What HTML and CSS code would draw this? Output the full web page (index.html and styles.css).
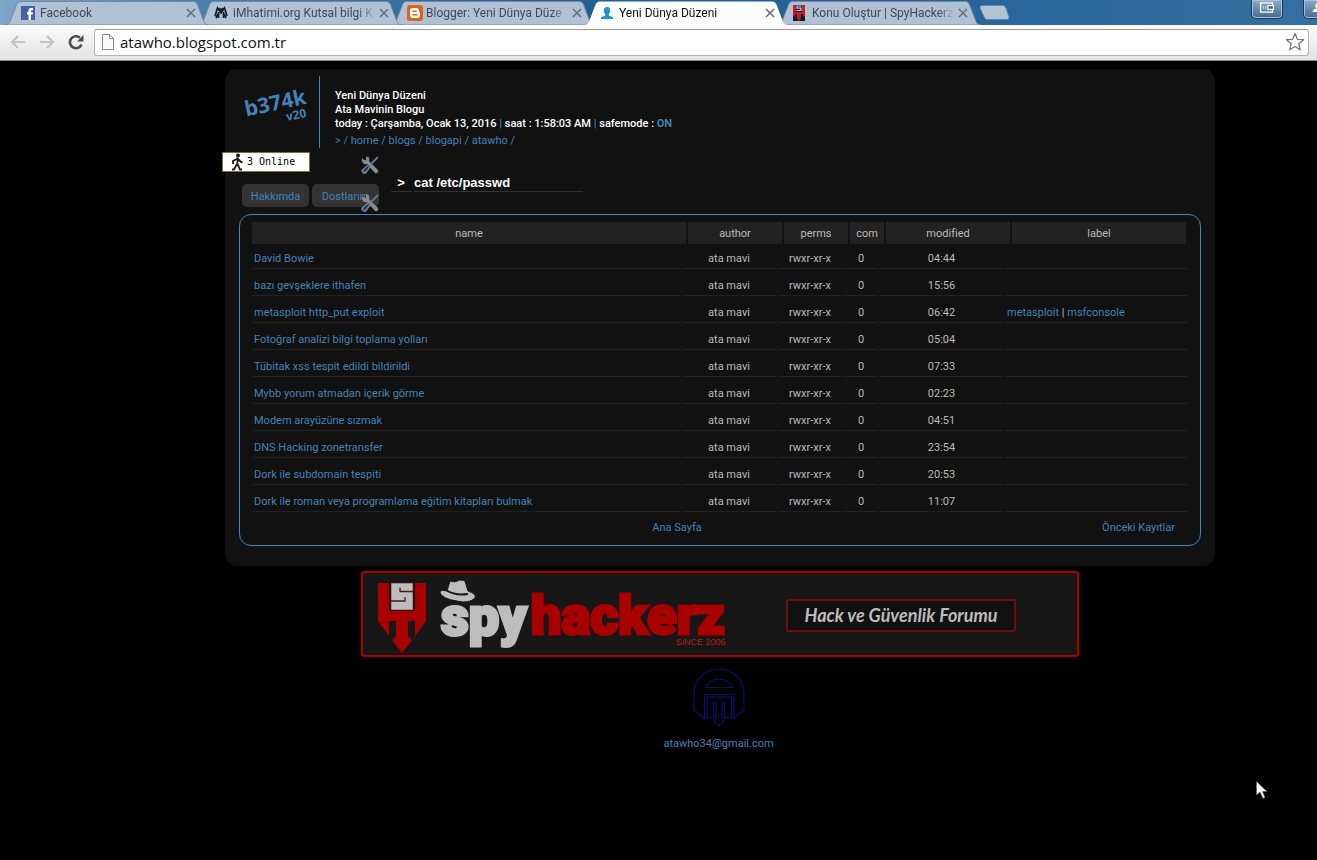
FILE: index.html
```html
<!DOCTYPE html>
<html lang="tr">
<head>
<meta charset="utf-8">
<title>Yeni Dünya Düzeni</title>
<link rel="stylesheet" href="styles.css">
</head>
<body>
<svg class="defs" aria-hidden="true">
  <symbol id="tab" viewBox="0 0 204 25" preserveAspectRatio="none">
    <path d="M0 25C4 25 5 22 6 19L11 6Q12 1.500 16 1.500H188Q192 1.500 193 6L198 19C199 22 200 25 204 25Z"/>
  </symbol>
  <symbol id="close" viewBox="0 0 10 10"><path d="M1 1L9 9M9 1L1 9" fill="none" stroke="currentColor" stroke-width="1.600"/></symbol>
  <symbol id="tools" viewBox="0 0 18 18">
    <path d="M1 2L3 4H5V1C8 0 9 3 8 5L17 14C18 16 16 18 14 17L6 8C3 9 0 6 1 2Z" fill="#8b8b8b"/>
    <path d="M17 1L9 9" stroke="#66758b" stroke-width="2"/>
    <path d="M8 8L10 10L5 17C3 19 0 16 1 14Z" fill="#526783" stroke="#98a2ae" stroke-width=".8"/>
    <path d="M3 15L7 11" stroke="#1d2d44" stroke-width="1.200"/>
  </symbol>
</svg>

<header class="browser">
  <nav class="tabs" aria-label="Sekmeler">
    <div class="tab t1">
      <svg class="shape"><use href="#tab"/></svg>
      <svg class="fav" viewBox="0 0 16 16"><rect x="0" y="1" width="14" height="14" fill="#4760a5"/><path d="M7.500 15V9.500H6V7.300H7.500V5.500Q7.500 3 10 3H12V5.200H10.800Q10 5.200 10 6V7.300H12L11.700 9.500H10V15Z" fill="#fff"/></svg>
      <a class="title" href="#">Facebook</a>
      <button class="x" aria-label="Kapat"><svg><use href="#close"/></svg></button>
    </div>
    <div class="tab t2">
      <svg class="shape"><use href="#tab"/></svg>
      <svg class="fav" viewBox="0 0 16 16"><path d="M1 11L3.500 3L7 8L10.500 3L13 11M4.500 13V7M9.500 13V7M2 13L4 9M12 13L10 9M5 3L7 5L9 3" fill="none" stroke="#121d2b" stroke-width="1.700"/></svg>
      <a class="title" href="#">iMhatimi.org Kutsal bilgi K</a>
      <button class="x" aria-label="Kapat"><svg><use href="#close"/></svg></button>
    </div>
    <div class="tab t3">
      <svg class="shape"><use href="#tab"/></svg>
      <svg class="fav" viewBox="0 0 16 16"><rect width="16" height="16" rx="3" fill="#d9651f"/><path d="M6 3H9Q12 3 12 6Q12 7 13 7.500V10Q13 13 10 13H6Q3 13 3 10V6Q3 3 6 3Z" fill="#fff"/><path d="M6 6.200H9M6 9.800H10" stroke="#d9651f" stroke-width="1.500" stroke-linecap="round"/></svg>
      <a class="title" href="#">Blogger: Yeni Dünya Düze</a>
      <button class="x" aria-label="Kapat"><svg><use href="#close"/></svg></button>
    </div>
    <div class="tab active">
      <svg class="shape"><use href="#tab"/></svg>
      <svg class="fav" viewBox="0 0 16 16"><path d="M7 2C9.500 2 10.500 4 10.200 6Q10 8 8.800 9V10.500L13 12.200V14H1V12.200L5.200 10.500V9Q4 8 3.800 6C3.500 4 4.500 2 7 2Z" fill="#1d94d2"/></svg>
      <a class="title" href="#">Yeni Dünya Düzeni</a>
      <button class="x" aria-label="Kapat"><svg><use href="#close"/></svg></button>
    </div>
    <div class="tab t5">
      <svg class="shape"><use href="#tab"/></svg>
      <svg class="fav" viewBox="0 0 16 16"><rect width="12" height="16" fill="#151b26"/><path d="M0 0H3V7H9V0H12V10L10 12V9H8V13L6 16L4 13V9H2V12L0 10Z" fill="#c61c28"/><path d="M8.500 1H4V3.200H8V5.500H3.500" fill="none" stroke="#c5ccd5" stroke-width="1.200"/></svg>
      <a class="title" href="#">Konu Oluştur | SpyHackerz</a>
      <button class="x" aria-label="Kapat"><svg><use href="#close"/></svg></button>
    </div>
    <button class="newtab" aria-label="Yeni sekme"><svg viewBox="0 0 31 15"><path d="M3 .5H24Q26 .5 27 3L30 12Q30.500 14.500 28 14.500H8Q6 14.500 5 12L1 3Q.5 .5 3 .5Z" fill="#b3c3d6" stroke="#5f86ab"/></svg></button>
    <div class="winbtns">
      <button class="winbtn" aria-label="Pencere"><svg viewBox="0 0 16 12"><path d="M14 3V1H1V11H14V9" fill="none" stroke="#fff" stroke-width="1.500"/><rect x="9" y="4" width="6" height="4" fill="#41566f" stroke="#fff" stroke-width="1.300"/><path d="M4 4V8M6.500 4V8" stroke="#ccd6e2"/></svg></button>
      <button class="winbtn" aria-label="Kullanıcı"><svg viewBox="0 0 16 12"><circle cx="7" cy="4" r="3" fill="#fff"/><path d="M1 11Q1 7 7 7T13 11Z" fill="#fff"/></svg></button>
    </div>
  </nav>
  <div class="toolbar">
    <button class="tool" aria-label="Geri"><svg viewBox="0 0 16 16"><path d="M15 8H2M8 2L2 8L8 14" fill="none" stroke="#c3c3c3" stroke-width="2.200"/></svg></button>
    <button class="tool" aria-label="İleri"><svg viewBox="0 0 16 16"><path d="M1 8H14M8 2L14 8L8 14" fill="none" stroke="#c3c3c3" stroke-width="2.200"/></svg></button>
    <button class="tool" aria-label="Yenile"><svg viewBox="0 0 16 16"><path d="M13.500 10.500A6 6 0 1 1 12 3.800" fill="none" stroke="#4d4d4d" stroke-width="2.600"/><path d="M15.500 1V7.500H9Z" fill="#4d4d4d"/></svg></button>
    <div class="omnibox">
      <svg class="doc" viewBox="0 0 12 16"><path d="M.5 .5H7.500L11.500 4.500V15.500H.5ZM7.500 .5V4.500H11.500" fill="#fafafa" stroke="#8a8a8a"/></svg>
      <input class="url" type="text" aria-label="Adres" value="atawho.blogspot.com.tr">
      <button class="star" aria-label="Yer imi"><svg viewBox="0 0 20 20"><path d="M10 1.500L12.400 7.300L18.600 7.700L13.800 11.700L15.300 17.800L10 14.500L4.700 17.800L6.200 11.700L1.400 7.700L7.600 7.300Z" fill="none" stroke="#777" stroke-width="1.300" stroke-linejoin="round"/></svg></button>
    </div>
  </div>
</header>

<main class="page">
  <section class="panel">
    <div class="head">
      <div class="logo"><a class="brand" href="#">b374k<span class="ver">v20</span></a></div>
      <div class="info">
        <div>Yeni Dünya Düzeni</div>
        <div>Ata Mavinin Blogu</div>
        <div>today : Çarşamba, Ocak 13, 2016 <b>|</b> saat : 1:58:03 AM <b>|</b> safemode : <b>ON</b></div>
        <div class="path">&gt; / <a href="#">home</a> / <a href="#">blogs</a> / <a href="#">blogapi</a> / <a href="#">atawho</a> /</div>
      </div>
    </div>
    <a class="counter" href="#"><svg viewBox="0 0 12 18"><circle cx="7" cy="2.500" r="2" fill="#1c1a10"/><path d="M6.500 4.500V11L9 16.500H11M6 11L3 16.500H1M6.500 5.500L2 8V11M7 6L10 9H11.500" fill="none" stroke="#1c1a10" stroke-width="1.800"/></svg>3 Online</a>
    <a class="edit one" href="#" aria-label="Düzenle"><svg><use href="#tools"/></svg></a>
    <div class="actions">
      <a class="pill" href="#">Hakkımda</a>
      <a class="pill" href="#">Dostlarım</a>
      <label class="prompt" for="cmd">&gt;</label>
      <input class="cmd" id="cmd" type="text" value="cat /etc/passwd">
    </div>
    <a class="edit two" href="#" aria-label="Düzenle"><svg><use href="#tools"/></svg></a>
    <div class="box">
      <table class="list">
        <thead><tr><th>name</th><th>author</th><th>perms</th><th>com</th><th>modified</th><th>label</th></tr></thead>
        <tbody>
          <tr><td><a href="#">David Bowie</a></td><td>ata mavi</td><td>rwxr-xr-x</td><td>0</td><td>04:44</td><td></td></tr>
          <tr><td><a href="#">bazı gevşeklere ithafen</a></td><td>ata mavi</td><td>rwxr-xr-x</td><td>0</td><td>15:56</td><td></td></tr>
          <tr><td><a href="#">metasploit http_put exploit</a></td><td>ata mavi</td><td>rwxr-xr-x</td><td>0</td><td>06:42</td><td><a href="#">metasploit</a> | <a href="#">msfconsole</a></td></tr>
          <tr><td><a href="#">Fotoğraf analizi bilgi toplama yolları</a></td><td>ata mavi</td><td>rwxr-xr-x</td><td>0</td><td>05:04</td><td></td></tr>
          <tr><td><a href="#">Tübitak xss tespit edildi bildirildi</a></td><td>ata mavi</td><td>rwxr-xr-x</td><td>0</td><td>07:33</td><td></td></tr>
          <tr><td><a href="#">Mybb yorum atmadan içerik görme</a></td><td>ata mavi</td><td>rwxr-xr-x</td><td>0</td><td>02:23</td><td></td></tr>
          <tr><td><a href="#">Modem arayüzüne sızmak</a></td><td>ata mavi</td><td>rwxr-xr-x</td><td>0</td><td>04:51</td><td></td></tr>
          <tr><td><a href="#">DNS Hacking zonetransfer</a></td><td>ata mavi</td><td>rwxr-xr-x</td><td>0</td><td>23:54</td><td></td></tr>
          <tr><td><a href="#">Dork ile subdomain tespiti</a></td><td>ata mavi</td><td>rwxr-xr-x</td><td>0</td><td>20:53</td><td></td></tr>
          <tr><td><a href="#">Dork ile roman veya programlama eğitim kitapları bulmak</a></td><td>ata mavi</td><td>rwxr-xr-x</td><td>0</td><td>11:07</td><td></td></tr>
        </tbody>
      </table>
      <div class="pager"><a class="home" href="#">Ana Sayfa</a><a href="#">Önceki Kayıtlar</a></div>
    </div>
  </section>

  <a class="banner" href="#">
    <svg class="wordmark" viewBox="0 0 366 82" role="img" aria-label="spyhackerz">
      <path d="M15 10H26V38H52V10H63V48L52 63V48H45V63L49 67L39 80L29 67L33 63V48H26V63L15 48Z" fill="#a80000"/>
      <rect x="28" y="10" width="22" height="27" fill="#bdbdbd" stroke="#5a1212" stroke-width=".6"/>
      <path d="M50 18.500H37V14.500M28 28H42V24" fill="none" stroke="#4a1818" stroke-width="1.300"/>
      <text class="w spy" x="78" y="62">spy</text>
      <text class="w hack" x="168" y="61">hackerz</text>
      <g class="hat"><path d="M84 18L87 8Q93 10 96 7Q100 7 102 8L105 18Q114 21 112 25Q106 31 94 28Q80 26 77 20Q77 16 84 18Z" fill="#bdbdbd" stroke="#171717"/><path d="M83 17Q92 23 105 21" fill="none" stroke="#171717" stroke-width="2"/></g>
      <text class="since" x="313" y="72">SiNCE 2006</text>
    </svg>
    <span class="slogan">Hack ve Güvenlik Forumu</span>
  </a>

  <footer class="foot">
    <svg class="mark" viewBox="0 0 52 60"><g fill="none" stroke="#04126a" stroke-width="1.200"><path d="M11 51L1 43V27A25 25 0 0 1 51 27V43L41 51V27.500H11.500V51H14V30H38.500V51H41"/><path d="M12.500 20.500Q17 12 26 12T39.500 20.500Z"/><path d="M14 50.500H20.500V35.500H23V50.500L21.500 52V55.500L26 58.500L30.500 55.500V52L29 50.500V35.500H31.500V50.500H38.500"/></g></svg>
    <a href="mailto:atawho34@gmail.com">atawho34@gmail.com</a>
  </footer>
</main>
<svg class="cursor" viewBox="0 0 12 19" aria-hidden="true"><path d="M.5 .5V14L4 11L7 17.500L9 16.500L6.500 10.500H11Z" fill="#fff" stroke="#555" stroke-width=".5"/></svg>
</body>
</html>
```
FILE: styles.css
```css
* { box-sizing: border-box; }

body {
  margin: 0;
  min-height: 100vh;
  overflow-x: hidden;
  background: #000;
  color: #bbb;
  font: 11px/14px Roboto, "Noto Sans", sans-serif;
}

a { color: #4682b4; text-decoration: none; }

button {
  display: block;
  padding: 0;
  border: 0;
  background: none;
}

button svg { display: block; width: 100%; height: 100%; }

.defs { position: absolute; width: 0; height: 0; }

/* browser chrome */
.tabs {
  display: flex;
  height: 25px;
  padding-left: 5px;
  overflow: hidden;
  background: linear-gradient(90deg, #7ea7c9 0, #4f83b0 12%, #235e91 45%, #26639a 70%, #34709f 100%);
}

.tab {
  position: relative;
  display: flex;
  align-items: center;
  gap: 3px;
  width: 204px;
  height: 25px;
  margin-right: -11px;
  padding: 0 13px 0 16px;
}

.t1 { z-index: 5; }
.t2 { z-index: 4; }
.t3 { z-index: 3; }
.t5 { z-index: 1; }
.active { z-index: 6; }

.shape {
  position: absolute;
  inset: 0;
  width: 100%;
  height: 100%;
  fill: #b1c1d4;
  stroke: #7188a2;
}

.active .shape { fill: #fcfcfc; stroke: none; }

.fav { position: relative; flex: none; width: 16px; height: 16px; }

.title {
  position: relative;
  flex: 1;
  overflow: hidden;
  color: #3f4a57;
  font: 12px/18px Roboto, "Open Sans", sans-serif;
  white-space: nowrap;
  mask-image: linear-gradient(90deg, #000 88%, transparent);
}

.active .title { color: #111; }

.x { position: relative; width: 10px; height: 10px; color: #66707c; }

.newtab { width: 31px; height: 15px; margin: 5px 0 0 9px; }

.winbtns { display: flex; gap: 20px; margin: 0 -18px 0 auto; }

.winbtn {
  width: 32px;
  height: 19px;
  padding: 2px 7px 5px;
  border: 1px solid #1c3a59;
  border-top: 0;
  border-radius: 0 0 5px 5px;
  background: linear-gradient(#8fabc6, #44698e);
  box-shadow: inset 0 0 0 1px #a9c0d6;
}

.toolbar {
  display: flex;
  align-items: center;
  gap: 13px;
  height: 36px;
  padding: 0 8px 1px 10px;
  border-bottom: 1px solid #8c8c8c;
  background: linear-gradient(#fcfcfc, #e2e2e2);
}

.tool { width: 16px; height: 16px; }

.omnibox {
  display: flex;
  flex: 1;
  align-items: center;
  gap: 6px;
  height: 27px;
  margin-left: -3px;
  padding: 0 3px 0 7px;
  border: 1px solid #b4b4b4;
  border-top-color: #999;
  border-radius: 3px;
  background: #fff;
}

.doc { width: 12px; height: 16px; }

.url {
  flex: 1;
  padding: 0;
  border: 0;
  outline: 0;
  background: none;
  color: #111;
  font: 15px/22px "Open Sans", sans-serif;
}

.star { width: 20px; height: 20px; }

/* blog page */
.page { padding: 8px 102px 0 225px; }

.panel {
  position: relative;
  padding: 7px 14px 20px;
  border-radius: 12px;
  background: #111;
}

.head { display: flex; height: 72px; }

.logo {
  display: flex;
  justify-content: center;
  width: 81px;
  padding-top: 14px;
  border-right: 1px solid #4682b4;
}

.brand {
  align-self: flex-start;
  margin-right: 6px;
  font: bold 21px/24px "Open Sans", sans-serif;
  transform: rotate(-12deg);
}

.ver {
  display: block;
  padding-right: 3px;
  font-size: 12px;
  line-height: 10px;
  text-align: right;
}

.info { padding: 13px 0 0 15px; color: #fff; font-weight: 500; }
.info b { color: #4682b4; }
.path { margin-top: 3px; color: #4682b4; font-weight: 400; }

.counter {
  position: absolute;
  top: 83px;
  left: -3px;
  display: flex;
  align-items: center;
  gap: 4px;
  width: 88px;
  height: 20px;
  padding-left: 8px;
  border: 1px solid #7d6f35;
  background: #fff;
  color: #000;
  font: 10px/14px "DejaVu Sans Mono", monospace;
}

.counter svg { width: 12px; height: 18px; }

.edit { position: absolute; left: 136px; width: 18px; height: 18px; }
.edit svg { display: block; width: 18px; height: 18px; }
.one { top: 87px; }
.two { top: 125px; }

.actions {
  display: flex;
  gap: 3px;
  padding: 26px 0 7px 3px;
}

.pill {
  width: 67px;
  height: 23px;
  margin-top: 10px;
  border-radius: 5px;
  background: #333;
  line-height: 25px;
  text-align: center;
}

.prompt, .cmd {
  height: 18px;
  padding: 0;
  border: 0;
  border-bottom: 1px solid #333;
  background: none;
  color: #fff;
  font: bold 13px/17px "Liberation Sans", sans-serif;
}

.prompt { width: 20px; margin-left: 9px; text-align: center; }
.cmd { width: 169px; outline: 0; }

.box {
  padding: 7px 12px 10px;
  border: 1px solid #4682b4;
  border-radius: 12px;
}

.list, .list thead, .list tbody { display: block; }
.list tbody { display: grid; gap: 2px; }
.list tr { display: grid; gap: 2px; }
.list thead tr { grid-template-columns: 1fr 94px 64px 34px 124px 174px; padding-right: 2px; }
.list tbody tr { grid-template-columns: 1fr 94px 64px 34px 123px 183px; }

.list th {
  padding: 5px 0 3px;
  background: #222;
  font-weight: 400;
}

.list td {
  height: 25px;
  padding: 8px 2px 2px;
  border-bottom: 1px solid #222;
  text-align: center;
}

.list td:first-child, .list td:last-child { text-align: left; }

.pager { display: flex; padding: 9px 13px 0 0; }
.home { flex: 1; text-align: center; }

.banner {
  display: flex;
  align-items: center;
  width: 718px;
  max-width: 100%;
  height: 86px;
  margin: 5px auto 0;
  border: 2px solid #a80000;
  border-radius: 3px;
  background: #171717;
}

.wordmark { flex: none; width: 366px; height: 82px; }
.w { font: 900 54px Roboto, "Liberation Sans", sans-serif; stroke-width: 3px; }
.spy { fill: #bdbdbd; stroke: #bdbdbd; }
.hack { fill: #a80000; stroke: #a80000; }
.since { fill: #b51d1d; font: 9px "Liberation Sans", sans-serif; }

.slogan {
  width: 230px;
  margin: 2px 0 0 57px;
  border: 2px solid #6f0c10;
  border-radius: 2px;
  background: #111;
  color: #bdbdbd;
  font: italic bold 18px/29px "Lato", sans-serif;
  text-align: center;
}

.foot {
  display: flex;
  flex-direction: column;
  align-items: center;
  gap: 10px;
  padding: 10px 3px 0 0;
}

.mark { width: 52px; height: 60px; }

.cursor {
  position: fixed;
  top: 781px;
  left: 1256px;
  width: 12px;
  height: 19px;
}
```
